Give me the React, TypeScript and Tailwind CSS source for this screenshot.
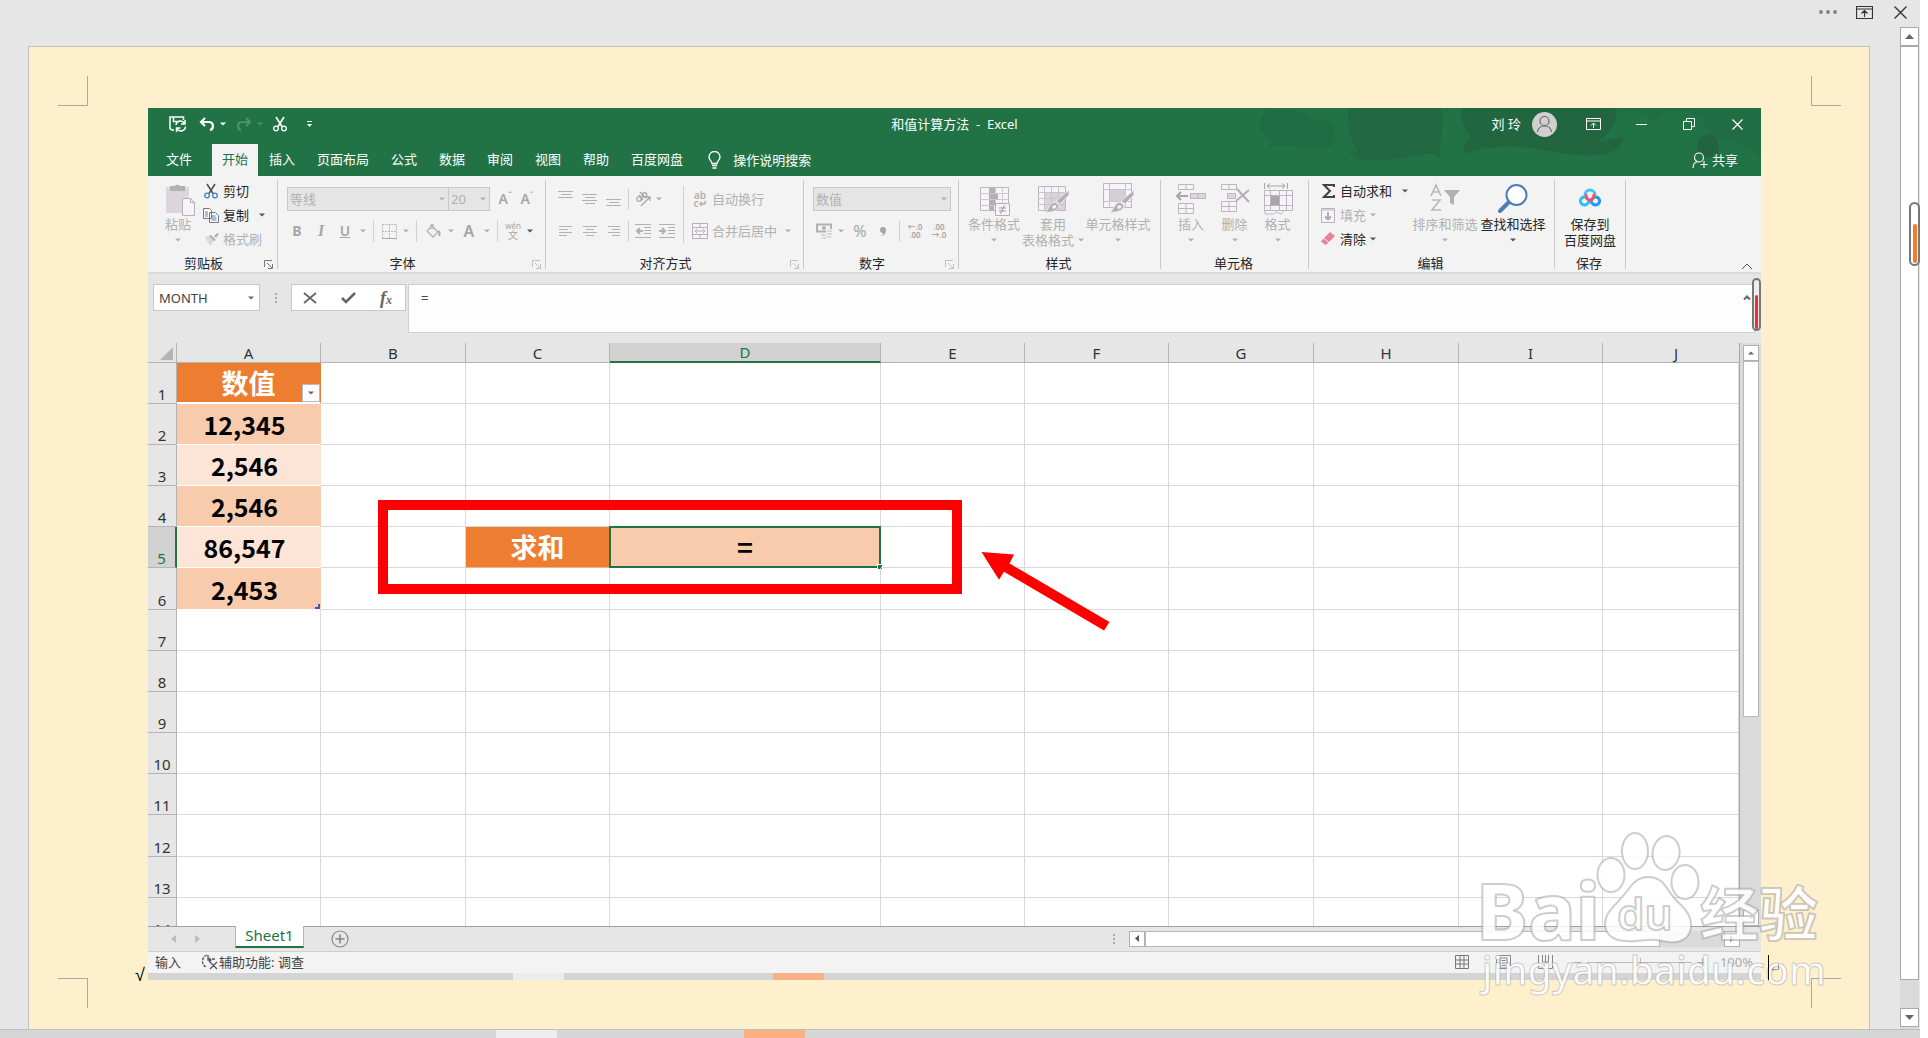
import type { ReactNode } from "react";

interface CellData {
  text: string;
  className: string;
}

const tabs = ["插入", "页面布局", "公式", "数据", "审阅", "视图", "帮助", "百度网盘"];

const columns = ["A", "B", "C", "D", "E", "F", "G", "H", "I", "J"];

const rows = [1, 2, 3, 4, 5, 6, 7, 8, 9, 10, 11, 12, 13, 14];

const cells: Record<string, CellData> = {
  A1: { text: "数值", className: "bg-[#ed7d31] text-[27px] text-white border-r-[#ed7d31] border-b-2 border-b-white" },
  A2: { text: "12,345", className: "bg-[#f8cbad] text-[25px] text-black border-r-[#f8cbad] border-b-white pr-2" },
  A3: { text: "2,546", className: "bg-[#fce4d6] text-[25px] text-black border-r-[#fce4d6] border-b-white pr-2" },
  A4: { text: "2,546", className: "bg-[#f8cbad] text-[25px] text-black border-r-[#f8cbad] border-b-white pr-2" },
  A5: { text: "86,547", className: "bg-[#fce4d6] text-[25px] text-black border-r-[#fce4d6] border-b-white pr-2" },
  A6: { text: "2,453", className: "bg-[#f8cbad] text-[25px] text-black border-r-[#f8cbad] border-b-white pr-2" },
  C5: { text: "求和", className: "bg-[#ed7d31] text-[27px] text-white border-[#f4b183]" },
  D5: { text: "=", className: "bg-[#f8cbad] text-[27px] text-black" },
};

function Caret({ className = "text-[#b1b1b1]" }: { className?: string }) {
  return (
    <svg width="6" height="4" viewBox="0 0 6 4" className={`shrink-0 ${className}`}>
      <path d="M0 .5h6L3 3.5z" fill="currentColor" />
    </svg>
  );
}

function CaretBox({ wide = true, className }: { wide?: boolean; className?: string }) {
  return (
    <span className={`flex shrink-0 justify-center ${wide ? "w-3" : "w-2"}`}>
      <Caret className={className} />
    </span>
  );
}

function IconButton({
  label,
  className = "w-6",
  children,
}: {
  label: string;
  className?: string;
  children: ReactNode;
}) {
  return (
    <button
      type="button"
      aria-label={label}
      className={`flex h-6 shrink-0 items-center justify-center ${className}`}
    >
      {children}
    </button>
  );
}

function Divider({ className }: { className: string }) {
  return <span className={`w-px shrink-0 bg-[#d2d2d2] ${className}`} />;
}

function Group({
  title,
  className,
  launcher,
  children,
}: {
  title: string;
  className: string;
  launcher?: string;
  children: ReactNode;
}) {
  return (
    <section className={`flex shrink-0 ${className}`}>
      <div className="flex min-w-0 flex-1 flex-col">
        <div className="flex h-[79px]">{children}</div>
        <div
          className={`relative flex h-[17px] items-center justify-center pb-px ${
            launcher ? "pr-[18px]" : "pr-[2px]"
          }`}
        >
          <h2>{title}</h2>
          {launcher && (
            <button
              type="button"
              aria-label={`${title}设置`}
              className={`absolute right-1 bottom-[3px] ${launcher}`}
            >
              <svg width="9" height="9" viewBox="0 0 9 9" fill="none" stroke="currentColor">
                <path d="M.5 7V.5H8M3 3l5 5M8.5 4v4.5H4" />
              </svg>
            </button>
          )}
        </div>
      </div>
      <span className="mt-1 h-[89px] w-px bg-[#c9c9c9]" />
    </section>
  );
}

function BigButton({
  icon,
  label,
  second,
  className,
  caretClass,
  noCaret,
}: {
  icon: ReactNode;
  label: string;
  second?: string;
  className: string;
  caretClass?: string;
  noCaret?: boolean;
}) {
  return (
    <button
      type="button"
      className={`flex shrink-0 flex-col items-center pt-[7px] leading-4 whitespace-nowrap ${className}`}
    >
      <span className="flex h-[33px] items-start">{icon}</span>
      <span>{label}</span>
      <span className="flex h-4 items-center gap-1">
        {second}
        {!noCaret && <Caret className={caretClass} />}
      </span>
    </button>
  );
}

function SmallButton({
  icon,
  label,
  className = "",
  children,
}: {
  icon: ReactNode;
  label: string;
  className?: string;
  children?: ReactNode;
}) {
  return (
    <button
      type="button"
      className={`flex h-6 items-center gap-1 whitespace-nowrap ${className}`}
    >
      <span className="flex w-4 justify-center">{icon}</span>
      {label}
      {children}
    </button>
  );
}

function DisabledSelect({
  label,
  value,
  className,
}: {
  label: string;
  value: string;
  className: string;
}) {
  return (
    <div className={`relative flex h-6 items-center ${className}`}>
      <select
        aria-label={label}
        disabled
        className="h-6 w-full appearance-none border border-[#c8c8c8] bg-[#e5e5e5] pl-[2px] leading-5 text-[#b1b1b1] opacity-100"
      >
        <option>{value}</option>
      </select>
      <span className="absolute right-1">
        <Caret />
      </span>
    </div>
  );
}

function Scissors({ blade, handle }: { blade: string; handle: string }) {
  return (
    <svg width="14" height="16" viewBox="0 0 14 16" fill="none">
      <path d="M3 1l6 9.5M11 1L5 10.5" className={blade} strokeWidth="1.6" />
      <circle cx="3" cy="12.5" r="2.3" className={handle} strokeWidth="1.3" />
      <circle cx="11" cy="12.5" r="2.3" className={handle} strokeWidth="1.3" />
    </svg>
  );
}

function Lines({ rows: d }: { rows: string }) {
  return (
    <svg width="16" height="18" viewBox="0 0 16 18">
      <path d={d} stroke="#b1b1b1" fill="none" />
    </svg>
  );
}

function Brush() {
  return (
    <>
      <path d="M33 7v5l-9 9-4-3z" fill="#b3afb3" stroke="#f3f3f3" strokeWidth=".8" />
      <path d="M19 19l4 3c0 5-6 8-14 7 4-2 4-9 10-10z" fill="#b3afb3" stroke="#f3f3f3" strokeWidth=".8" />
      <path d="M18 22c2 0 3 1 2 3l-3 1c-1-2-1-3 1-4z" fill="#f3f3f3" />
    </>
  );
}

function TitleBar() {
  return (
    <header className="relative bg-[#217346] text-white">
      <svg
        className="absolute top-0 right-0"
        width="510"
        height="68"
        viewBox="0 0 510 68"
        aria-hidden="true"
      >
        <path d="M18 2h24c14 2 18 8 22 10 12-2 22 4 20 16-1 4-3 6-6 7l7-1c-2 6-20 9-34 5-14-2-24-2-34 1l4-8C2 24 8 6 18 2z" fill="#206c42" />
        <path d="M98 0h92c3 12 1 30-2 40l2 10-8-4c-18 0-26 5-54 6-16 1-26-2-31-9l10 1c-8-12-12-30-9-44z" fill="#226841" />
        <path d="M211 0h153c4 12-3 26-18 34 10 0 18-5 26-4 0 14-20 19-42 17-32-2-48-10-80-8-16 0-28 4-38 7 0-8 4-14 8-18-8-6-11-18-9-28z" fill="#226640" />
        <path d="M366 6c16-6 30 0 38 10 12-18 34-18 46-4 6 6 8 12 8 18l22 2c14 6 22 12 30 18V0H366z" fill="#216d43" />
        <circle cx="457" cy="38" r="11" fill="#22643f" />
      </svg>

      <div className="relative grid h-9 grid-cols-[1fr_auto_1fr] items-center pb-1">
        <div className="flex items-center pl-5">
          <button type="button" aria-label="保存" className="flex w-5 justify-center">
            <svg width="18" height="16" viewBox="0 0 18 16" fill="none" stroke="white" strokeWidth="1.5">
              <path d="M5 14H3L1 12.500V1h13.500v3M4.500 1v4.500h4" />
              <path d="M7 9a4.500 4.500 0 0 1 8.500-1.500M16.500 10.500a4.500 4.500 0 0 1-8.500 2M16 4v4h-4M7.500 16v-4h4" />
            </svg>
          </button>
          <button type="button" aria-label="撤消" className="ml-[9px] flex w-5 justify-center">
            <svg width="16" height="14" viewBox="0 0 16 14" fill="none" stroke="white" strokeWidth="2.200">
              <path d="M6 1L2 5l4 4M2 5h8c5 0 5 7 1 8" />
            </svg>
          </button>
          <CaretBox className="text-white" />
          <button type="button" aria-label="恢复" className="ml-[5px] flex w-5 justify-center">
            <svg width="16" height="14" viewBox="0 0 16 14" fill="none" stroke="#4d9069" strokeWidth="2.200">
              <path d="M10 1l4 4-4 4M14 5H6C1 5 1 12 5 13" />
            </svg>
          </button>
          <CaretBox className="text-[#4d9069]" />
          <button type="button" aria-label="剪切" className="ml-1 flex w-5 justify-center">
            <Scissors blade="stroke-white" handle="stroke-white" />
          </button>
          <button type="button" aria-label="自定义快速访问工具栏" className="ml-[13px] flex w-3 justify-center">
            <svg width="5" height="6" viewBox="0 0 5 6" fill="white">
              <path d="M0 0h5v1H0zM0 3h5L2.500 6z" />
            </svg>
          </button>
        </div>

        <h1 className="whitespace-pre">和值计算方法  -  Excel</h1>

        <div className="flex items-center justify-end">
          <span className="mr-[11px]">刘 玲</span>
          <svg width="25" height="25" viewBox="0 0 25 25" className="mr-3">
            <circle cx="12.500" cy="12.500" r="12.500" fill="#d0d0d0" />
            <g fill="none" stroke="#666" strokeWidth="1.200">
              <circle cx="12.500" cy="9" r="4.500" />
              <path d="M5.500 20c1-8 13-8 14 0" />
            </g>
          </svg>
          <button type="button" aria-label="功能区显示选项" className="flex w-12 justify-center">
            <svg width="15" height="12" viewBox="0 0 15 12" fill="none" stroke="white">
              <path d="M.5.5h14v11H.5zM.5 3h14M7.500 10V5M5 7.500L7.500 5 10 7.500" />
            </svg>
          </button>
          <button type="button" aria-label="最小化" className="flex w-12 justify-center">
            <span className="h-px w-[11px] bg-white" />
          </button>
          <button type="button" aria-label="还原" className="flex w-12 justify-center">
            <svg width="12" height="12" viewBox="0 0 12 12" fill="none" stroke="white">
              <path d="M.5 3.500h8v8h-8zM3.500 3V.5h8v8H9" />
            </svg>
          </button>
          <button type="button" aria-label="关闭" className="flex w-12 justify-center">
            <svg width="11" height="11" viewBox="0 0 11 11" stroke="white" strokeWidth="1.200">
              <path d="M.5.5l10 10M10.500.5l-10 10" />
            </svg>
          </button>
        </div>
      </div>

      <nav className="relative flex h-8 items-stretch whitespace-nowrap">
        <button type="button" className="w-16 shrink-0 pr-[2px] pb-[3px]">文件</button>
        <button type="button" className="w-[46px] shrink-0 bg-[#f3f3f3] pb-[3px] text-[#217346]">
          开始
        </button>
        {tabs.map((tab) => (
          <button key={tab} type="button" className="px-[11px] pb-[3px]">
            {tab}
          </button>
        ))}
        <button type="button" className="ml-[14px] flex items-center gap-3 pb-px">
          <svg width="13" height="18" viewBox="0 0 13 18" fill="none" stroke="white" strokeWidth="1.300">
            <path d="M4 12.500C4 10 1 9 1 6a5.500 5.500 0 0 1 11 0c0 3-3 4-3 6.500zM4 14.500h5M4.500 17h4" />
          </svg>
          操作说明搜索
        </button>
        <button type="button" className="mr-[23px] ml-auto flex items-center gap-1">
          <svg width="16" height="17" viewBox="0 0 16 17" fill="none" stroke="white" strokeWidth="1.100">
            <circle cx="7" cy="5.500" r="4.500" />
            <path d="M1 16c0-4 2-6 5-6.500M12 9v7M8.500 12.500h7" />
          </svg>
          共享
        </button>
      </nav>
    </header>
  );
}

function ClipboardGroup() {
  return (
    <Group title="剪贴板" className="w-[130px]" launcher="text-[#777]">
      <BigButton
        className="ml-[10px] w-10 text-[#b1b1b1]"
        label="粘贴"
        icon={
          <svg width="30" height="33" viewBox="0 0 30 33" className="ml-1">
            <path d="M1 4h23v26H1z" fill="#dcd6dc" />
            <path d="M5 3h5a3 3 0 0 1 5 0h5v5H5z" fill="#b1b1b1" />
            <path d="M17.500 15.500h8l4 4v13h-12z" fill="#f8f3fa" stroke="#b8b0b8" />
            <path d="M25.500 15.500v4h4" fill="none" stroke="#b8b0b8" />
          </svg>
        }
      />
      <div className="ml-[5px] flex flex-col pt-[3px]">
        <SmallButton
          label="剪切"
          icon={<Scissors blade="stroke-[#555]" handle="stroke-[#4a7ebb]" />}
        />
        <SmallButton
          label="复制"
          icon={
            <svg width="16" height="15" viewBox="0 0 16 15" fill="white" stroke="#777">
              <path d="M.5.500h6l2 2v8h-8zM6.500 4.500h6l3 3v7h-9z" />
              <path d="M2 4h3M2 6h3M2 8h3M8.500 8h4M8.500 10h5M8.500 12h5" stroke="#4a7ebb" />
            </svg>
          }
        >
          <span className="ml-[6px]">
            <Caret className="text-[#555]" />
          </span>
        </SmallButton>
        <SmallButton
          label="格式刷"
          className="text-[#b1b1b1]"
          icon={
            <svg width="15" height="13" viewBox="0 0 15 13">
              <path d="M1 4l5-1 4 5-4 5z" fill="#ddd6dd" />
              <path d="M7 2l5 5-2 1-5-5zM10 3l3-3 2 1-3 4z" fill="#b1b1b1" />
            </svg>
          }
        />
      </div>
    </Group>
  );
}

function FontGroup() {
  return (
    <Group title="字体" className="w-[268px]" launcher="text-[#c0c0c0]">
      <div className="flex flex-col gap-2 pt-[11px] text-[#a6a6a6]">
        <div className="flex pl-[9px]">
          <DisabledSelect label="字体" value="等线" className="w-[162px]" />
          <DisabledSelect label="字号" value="20" className="-ml-px w-[42px]" />
          <IconButton label="增大字号" className="ml-1 w-[22px] text-sm font-semibold">
            A<sup className="text-[8px]">ˆ</sup>
          </IconButton>
          <IconButton label="减小字号" className="w-[22px] text-sm font-semibold">
            A<sup className="text-[8px]">ˇ</sup>
          </IconButton>
        </div>
        <div className="flex items-center pl-[7px] text-sm">
          <IconButton label="加粗">
            <b>B</b>
          </IconButton>
          <IconButton label="倾斜">
            <i className="font-['Liberation_Serif'] text-base font-bold">I</i>
          </IconButton>
          <IconButton label="下划线">
            <u className="font-semibold">U</u>
          </IconButton>
          <CaretBox />
          <Divider className="mx-1 h-[22px]" />
          <IconButton label="边框" className="w-[22px]">
            <svg width="15" height="15" viewBox="0 0 15 15" fill="none" stroke="#c0b4c0">
              <path d="M.5.500h14v14H.5zM7.500 0v15M0 7.500h15" strokeDasharray="2 1" />
              <path d="M0 14.500h15" stroke="#aaa" />
            </svg>
          </IconButton>
          <CaretBox />
          <Divider className="mx-1 h-[22px]" />
          <IconButton label="填充颜色">
            <svg width="15" height="15" viewBox="0 0 15 15" fill="none" stroke="#b1b1b1" strokeWidth="1.300">
              <path d="M6 2l6 6-5 5-6-6zM5 5V1h2v4" />
              <path d="M12 7c2 1 2 3 1 5" strokeWidth="2" />
            </svg>
          </IconButton>
          <CaretBox />
          <IconButton label="字体颜色">
            <span className="text-base font-semibold">A</span>
          </IconButton>
          <CaretBox />
          <Divider className="mx-1 h-[22px]" />
          <IconButton label="拼音" className="w-[22px] flex-col">
            <span className="text-[8px] leading-[8px]">wén</span>
            <span className="text-[10px] leading-[11px]">文</span>
          </IconButton>
          <CaretBox className="text-[#555]" />
        </div>
      </div>
    </Group>
  );
}

function AlignGroup() {
  return (
    <Group title="对齐方式" className="w-[258px]" launcher="text-[#c0c0c0]">
      <div className="flex w-[137px] flex-col gap-2 pt-[11px] pl-2">
        <div className="flex items-center">
          <IconButton label="顶端对齐">
            <Lines rows="M0 1.500h15M3 4.500h10M0 7.500h15" />
          </IconButton>
          <IconButton label="垂直居中">
            <Lines rows="M0 4.500h15M3 7.500h10M0 10.500h15M3 13.500h10" />
          </IconButton>
          <IconButton label="底端对齐">
            <Lines rows="M0 9.500h15M3 12.500h10M0 15.500h15" />
          </IconButton>
          <Divider className="mx-[2px] h-[22px]" />
          <IconButton label="方向">
            <svg width="17" height="16" viewBox="0 0 17 16" fill="none" stroke="#a6a6a6" strokeWidth="1.300">
              <circle cx="4" cy="8" r="2.300" />
              <path d="M4 4l4 5M5 1l6 6" />
              <circle cx="9.500" cy="4" r="2.300" />
              <path d="M6 15L15 6M11 6h4v4" />
            </svg>
          </IconButton>
          <CaretBox wide={false} />
        </div>
        <div className="flex items-center">
          <IconButton label="左对齐">
            <Lines rows="M1 4.500h13M1 7.500h9M1 10.500h13M1 13.500h8" />
          </IconButton>
          <IconButton label="居中">
            <Lines rows="M1 4.500h14M4 7.500h8M1 10.500h14M4 13.500h8" />
          </IconButton>
          <IconButton label="右对齐">
            <Lines rows="M2 4.500h12M6 7.500h8M2 10.500h12M6 13.500h8" />
          </IconButton>
          <Divider className="mx-[2px] h-[22px]" />
          <IconButton label="减少缩进量">
            <svg width="16" height="16" viewBox="0 0 16 16" fill="none" stroke="#b1b1b1">
              <path d="M0 1.500h16M9 4.500h7M9 7.500h7M9 10.500h7M0 14.500h16" />
              <path d="M8 8H2M5 5L2 8l3 3" strokeWidth="2" />
            </svg>
          </IconButton>
          <IconButton label="增加缩进量">
            <svg width="16" height="16" viewBox="0 0 16 16" fill="none" stroke="#b1b1b1">
              <path d="M0 1.500h16M9 4.500h7M9 7.500h7M9 10.500h7M0 14.500h16" />
              <path d="M0 8h6M3 5l3 3-3 3" strokeWidth="2" />
            </svg>
          </IconButton>
        </div>
      </div>
      <Divider className="mt-[10px] h-[57px]" />
      <div className="flex flex-col gap-2 pt-[11px] pl-2 text-[#b1b1b1]">
        <SmallButton
          label="自动换行"
          icon={
            <span className="flex flex-col text-[10px] leading-[8px] font-semibold">
              <span>ab</span>
              <span>c↵</span>
            </span>
          }
        />
        <SmallButton
          label="合并后居中"
          icon={
            <svg width="16" height="16" viewBox="0 0 16 16" fill="#f8f3fa" stroke="#b9adb9">
              <path d="M.5.500h15v15H.5zM.5 4.500h15M.5 11.500h15M8 .5v4M8 11.500v4" />
              <path d="M3 8h10M5 6L3 8l2 2M11 6l2 2-2 2" fill="none" />
            </svg>
          }
        >
          <span className="ml-1">
            <Caret />
          </span>
        </SmallButton>
      </div>
    </Group>
  );
}

function NumberGroup() {
  return (
    <Group title="数字" className="w-[155px]" launcher="text-[#c0c0c0]">
      <div className="flex flex-col gap-2 pt-[11px] pl-[9px] text-[#a6a6a6]">
        <DisabledSelect label="数字格式" value="数值" className="w-[138px]" />
        <div className="flex items-center">
          <IconButton label="会计数字格式" className="w-[22px]">
            <svg width="16" height="16" viewBox="0 0 16 16">
              <path d="M1 1.500h14v7H1z" fill="#f3f3f3" stroke="#b1b1b1" strokeWidth="2" />
              <circle cx="8" cy="5" r="2" fill="#b1b1b1" />
              <path d="M10 6h6v9h-6z" fill="#f3f3f3" />
              <path d="M11 7h5v2h-5zM11 10h5v2h-5zM11 13h4v2h-4zM5 11h5v2H5zM6 14h4v2H6z" fill="#ddd6dd" />
            </svg>
          </IconButton>
          <CaretBox />
          <IconButton label="百分比样式" className="w-[26px] text-base">%</IconButton>
          <IconButton label="千位分隔样式" className="w-5">
            <svg width="6" height="9" viewBox="0 0 6 9">
              <path d="M1 9c2-1 2-2 2-3a3 3 0 1 1 3-3c0 3-2 6-5 6z" fill="#a6a6a6" />
            </svg>
          </IconButton>
          <Divider className="mr-[3px] ml-[6px] h-[22px]" />
          <IconButton label="增加小数位数" className="w-6 flex-col text-[8px] leading-[8px] font-semibold">
            <span>←.0</span>
            <span>.00</span>
          </IconButton>
          <IconButton label="减少小数位数" className="w-6 flex-col text-[8px] leading-[8px] font-semibold">
            <span>.00</span>
            <span>→.0</span>
          </IconButton>
        </div>
      </div>
    </Group>
  );
}

function StylesGroup() {
  return (
    <Group title="样式" className="w-[202px]">
      <div className="flex pl-[7px] text-[#b1b1b1]">
        <BigButton
          className="w-14"
          label="条件格式"
          icon={
            <svg width="32" height="33" viewBox="0 0 32 33">
              <path d="M2.500 4.500h28v23h-28z" fill="#f8f3fa" stroke="#bdb5bd" />
              <path d="M2 10.500h29M2 16.500h29M2 22.500h29M11.500 4v24M17.500 4v24M24.500 4v24" stroke="#cfc7cf" />
              <path d="M11 5h6v5h-6zM11 11h9v5h-9zM11 17h6v5h-6zM11 23h5v4h-5z" fill="#b3afb3" />
              <path d="M17.500 20.500h14v12h-14z" fill="#f8f3fa" stroke="#b3afb3" />
              <path d="M21 25h7M21 28h7M26.500 22l-4 9" stroke="#999" />
            </svg>
          }
        />
        <BigButton
          className="w-[62px]"
          label="套用"
          second="表格格式"
          icon={
            <svg width="34" height="33" viewBox="0 0 34 33">
              <path d="M2.500 3.500h27v24h-27z" fill="#f8f3fa" stroke="#bdb5bd" />
              <path d="M9 10h20v17H9z" fill="#d9d3d9" />
              <path d="M2 9.500h28M2 15.500h28M2 21.500h28M8.500 3v25M15.500 3v25M22.500 3v25" stroke="#cbc3cb" />
              <Brush />
            </svg>
          }
        />
        <BigButton
          className="w-[68px]"
          label="单元格样式"
          icon={
            <svg width="34" height="33" viewBox="0 0 34 33">
              <path d="M2.500.500h28v24h-28z" fill="#f8f3fa" stroke="#bdb5bd" />
              <path d="M2 6.500h28M2 18.500h28M8.500.500v24M24.500.500v24" stroke="#cbc3cb" />
              <path d="M9 7h15v11H9z" fill="#d5cfd5" />
              <Brush />
            </svg>
          }
        />
      </div>
    </Group>
  );
}

function CellsGroup() {
  return (
    <Group title="单元格" className="w-[148px]">
      <div className="flex pl-2 text-[#b1b1b1]">
        <BigButton
          className="w-11"
          label="插入"
          icon={
            <svg width="31" height="32" viewBox="0 0 31 32" fill="#f8f3fa" stroke="#bdb5bd">
              <path d="M2.500 1.500h15v5h-15zM10 1v5M2.500 20.500h15v10h-15zM2.500 25.500h15M10 20v10" />
              <path d="M14.500 10.500h15v5h-15zM22 10v5" fill="#dcd5dc" />
              <path d="M12 13H1M5 9l-4 4 4 4" fill="none" stroke="#a9a5a9" strokeWidth="2" />
            </svg>
          }
        />
        <BigButton
          className="w-[43px]"
          label="删除"
          icon={
            <svg width="31" height="32" viewBox="0 0 31 32" fill="#f8f3fa" stroke="#bdb5bd">
              <path d="M2.500 1.500h15v5h-15zM10 1v5M2.500 18.500h15v10h-15zM2.500 23.500h15M10 18v10" />
              <path d="M8.500 10.500h8v5h-8z" fill="#dcd5dc" />
              <path d="M18 6l12 13M30 7L17 18" fill="none" stroke="#b3afb3" strokeWidth="2" />
            </svg>
          }
        />
        <BigButton
          className="w-[43px]"
          label="格式"
          icon={
            <svg width="30" height="33" viewBox="0 0 30 33" fill="#f8f3fa" stroke="#bdb5bd">
              <path d="M1.500 7.500h28v20h-28zM1 12.500h28M1 22.500h28M7.500 7v20M16.500 7v20M23.500 7v20M2 28v3h9l2-2 5 2 3-3" />
              <path d="M8 13h8v9H8z" fill="#a9a5a9" stroke="none" />
              <path d="M1.500 0v6M24.500 0v6M4 3h18M7 .5L4 3l3 2.500M19 .5L22 3l-3 2.500" fill="none" stroke="#a9a5a9" />
            </svg>
          }
        />
      </div>
    </Group>
  );
}

function EditGroup() {
  return (
    <Group title="编辑" className="w-[246px]">
      <div className="flex w-[102px] shrink-0 flex-col pt-[3px] pl-[11px]">
        <SmallButton
          label="自动求和"
          icon={
            <svg width="13" height="14" viewBox="0 0 13 14" fill="none" stroke="#444" strokeWidth="2">
              <path d="M12 3V1H2l6 6-6 6h10v-2" />
            </svg>
          }
        >
          <span className="ml-[6px]">
            <Caret className="text-[#555]" />
          </span>
        </SmallButton>
        <SmallButton
          label="填充"
          className="text-[#b1b1b1]"
          icon={
            <svg width="14" height="15" viewBox="0 0 14 15" fill="#f8f3fa" stroke="#b9b1b9">
              <path d="M.5.500h13v14H.5zM.5 2h13" />
              <path d="M7 4v7M4 8.500L7 11.500l3-3" fill="none" stroke="#a9a5a9" strokeWidth="1.800" />
            </svg>
          }
        >
          <Caret />
        </SmallButton>
        <SmallButton
          label="清除"
          icon={
            <svg width="14" height="14" viewBox="0 0 14 14" fill="#e8829a">
              <path d="M9 0l5 4-6 6-5-4zM2.500 6.500l5 4L4.500 13 0 9.500z" />
            </svg>
          }
        >
          <Caret className="text-[#555]" />
        </SmallButton>
      </div>
      <BigButton
        className="w-[68px] text-[#b1b1b1]"
        label="排序和筛选"
        icon={
          <svg width="30" height="30" viewBox="0 0 30 30" fill="none" stroke="#b9b9b9" strokeWidth="1.600">
            <path d="M1 13L6 2l5 11M3 9h6M2 17h8L2 27h9" />
            <path d="M14 7h16l-6 7v8l-4-2v-6z" fill="#b1b1b1" stroke="none" />
          </svg>
        }
      />
      <BigButton
        className="w-[68px]"
        label="查找和选择"
        caretClass="text-[#555]"
        icon={
          <svg width="30" height="31" viewBox="0 0 30 31">
            <path d="M11 19l-9 9" stroke="#4a7ebb" strokeWidth="4" strokeLinecap="round" />
            <circle cx="18.500" cy="12" r="10" fill="white" stroke="#4a7ebb" strokeWidth="2" />
          </svg>
        }
      />
    </Group>
  );
}

function Ribbon() {
  return (
    <div className="relative flex h-[98px] border-b-2 border-[#dadada] bg-[#f3f3f3]">
      <ClipboardGroup />
      <FontGroup />
      <AlignGroup />
      <NumberGroup />
      <StylesGroup />
      <CellsGroup />
      <EditGroup />
      <Group title="保存" className="w-[71px]">
        <BigButton
          className="flex-1"
          label="保存到"
          second="百度网盘"
          noCaret
          icon={
            <svg width="24" height="26" viewBox="0 0 24 26" fill="none" strokeWidth="3">
              <path d="M7 12a5 5 0 1 1 10 0" stroke="#45c4f5" />
              <path d="M9.500 15.500a4 4 0 1 0 0 5l5-5" stroke="#2ac0f5" />
              <path d="M14.500 15.500a4 4 0 1 1 0 5l-2-2" stroke="#1a9cf5" />
              <path d="M8.500 11a4 4 0 1 0 7 0" stroke="#f2506b" />
            </svg>
          }
        />
      </Group>
      <button type="button" aria-label="折叠功能区" className="absolute right-2 bottom-[2px]">
        <svg width="12" height="7" viewBox="0 0 12 7" fill="none" stroke="#555">
          <path d="M1 6l5-5 5 5" />
        </svg>
      </button>
    </div>
  );
}

function FormulaBar() {
  return (
    <div className="relative flex items-start bg-[#e6e6e6] pt-[10px] pr-[6px] pb-[10px] pl-[5px]">
      <div className="relative flex h-[27px] w-[107px] items-center">
        <select
          aria-label="名称框"
          className="h-full w-full appearance-none border border-[#c8c8c8] bg-white pl-[5px] text-[#444]"
        >
          <option>MONTH</option>
        </select>
        <span className="absolute right-[6px]">
          <Caret className="text-[#666]" />
        </span>
      </div>
      <div className="flex h-[27px] w-[31px] flex-col items-center justify-center gap-[2px]">
        <span className="size-[2px] bg-[#aaa]" />
        <span className="size-[2px] bg-[#aaa]" />
        <span className="size-[2px] bg-[#aaa]" />
      </div>
      <div className="flex h-[27px] w-[115px] shrink-0 items-center border border-[#c8c8c8] bg-white">
        <IconButton label="取消" className="w-9">
          <svg width="14" height="12" viewBox="0 0 14 12" stroke="#666" strokeWidth="1.800">
            <path d="M1 1l12 10M13 1L1 11" />
          </svg>
        </IconButton>
        <IconButton label="输入" className="w-10">
          <svg width="15" height="12" viewBox="0 0 15 12" fill="none" stroke="#666" strokeWidth="2.600">
            <path d="M1 6l4 4 9-9" />
          </svg>
        </IconButton>
        <IconButton label="插入函数" className="w-9">
          <i className="font-['Liberation_Serif'] text-lg font-bold text-[#666]">
            f<span className="text-xs">x</span>
          </i>
        </IconButton>
      </div>
      <textarea
        aria-label="编辑栏"
        defaultValue="="
        className="ml-[2px] block h-[49px] flex-1 resize-none border border-[#d0d0d0] bg-[#fdfdfd] py-1 pl-3 leading-[18px] text-[#444]"
      />
      <span className="absolute top-[21px] right-[10px]">
        <svg width="8" height="5" viewBox="0 0 8 5">
          <path d="M1 4.500L4 1.500l3 3" fill="none" stroke="#666" strokeWidth="2" />
        </svg>
      </span>
      <span className="absolute top-1 right-0 flex h-[53px] w-[9px] items-end justify-center rounded-full border-2 border-[#777] bg-[#eee]">
        <span className="h-[34px] w-[3px] rounded-full bg-[#f22d2d]" />
      </span>
    </div>
  );
}

function Cell({ id }: { id: string }) {
  const cell = cells[id];
  return (
    <td
      className={`relative border-r border-b p-0 text-center font-['Noto_Sans_CJK_SC',sans-serif] leading-[38px] font-bold ${
        cell ? cell.className : "border-[#d9d9d9]"
      }`}
    >
      {cell?.text}
      {id === "A1" && (
        <button
          type="button"
          aria-label="筛选"
          className="absolute right-0 bottom-0 flex size-[18px] items-center justify-center border border-[#bbb] bg-[#fafafa]"
        >
          <Caret className="text-[#666]" />
        </button>
      )}
      {id === "A6" && (
        <svg width="5" height="5" viewBox="0 0 5 5" className="absolute right-0 bottom-0">
          <path d="M3 0h2v5H0V3h3z" fill="#4555a5" />
        </svg>
      )}
      {id === "D5" && (
        <span className="absolute -inset-px border-2 border-[#217346]">
          <span className="absolute -right-[3px] -bottom-[3px] size-[5px] border-t border-l border-white bg-[#217346]" />
        </span>
      )}
    </td>
  );
}

function Sheet() {
  return (
    <div className="flex h-[583px]">
      <div className="relative min-w-0 flex-1 overflow-hidden border-r border-[#a8a8a8] bg-white">
        <table className="w-full table-fixed border-separate border-spacing-0">
          <colgroup>
            <col className="w-[29px]" />
            <col className="w-[144px]" />
            <col className="w-[145px]" />
            <col className="w-[144px]" />
            <col className="w-[271px]" />
            <col className="w-[144px]" />
            <col className="w-[144px]" />
            <col className="w-[145px]" />
            <col className="w-[145px]" />
            <col className="w-[144px]" />
            <col />
          </colgroup>
          <thead>
            <tr className="h-5 text-[15px] leading-[18px]">
              <th className="border-r border-b border-[#b4b4b4] bg-[#e6e6e6] p-0">
                <svg width="13" height="13" viewBox="0 0 13 13" className="mt-[2px] ml-3">
                  <path d="M13 0v13H0z" fill="#b4b4b4" />
                </svg>
              </th>
              {columns.map((column, i) => (
                <th
                  key={column}
                  className={`p-0 font-normal ${
                    column === "D"
                      ? "border-r border-b-2 border-r-[#b4b4b4] border-b-[#217346] bg-[#d2d2d2] text-[#217346]"
                      : i === 9
                        ? "border-b border-[#b4b4b4] bg-[#e6e6e6] pl-[10px] text-[#333]"
                        : "border-r border-b border-[#b4b4b4] bg-[#e6e6e6] text-[#333]"
                  }`}
                >
                  {column}
                </th>
              ))}
            </tr>
          </thead>
          <tbody>
            {rows.map((row) => (
              <tr key={row} className={row % 6 === 0 ? "h-[42px]" : "h-[41px]"}>
                <th
                  className={`border-b border-b-[#b4b4b4] p-0 align-bottom text-[15px] leading-[17px] font-normal ${
                    row === 5
                      ? "border-r-2 border-r-[#217346] bg-[#d2d2d2] text-[#217346]"
                      : "border-r border-r-[#b4b4b4] bg-[#e6e6e6] text-[#333]"
                  }`}
                >
                  {row}
                </th>
                {columns.map((column) => (
                  <Cell key={column} id={`${column}${row}`} />
                ))}
              </tr>
            ))}
          </tbody>
        </table>

        {/* callout drawn over the sum cells */}
        <div className="absolute top-[157px] left-[230px] h-[94px] w-[584px] border-[10px] border-[#ff0000]" />
        <svg width="130" height="82" viewBox="0 0 130 82" className="absolute top-[208px] left-[832px]">
          <path d="M1.500 1L34 3.500l-4.500 9L129.500 71l-5.500 8.500L24 20.700l-5 8z" fill="#ff0000" />
        </svg>
      </div>

      <div className="flex w-[21px] shrink-0 flex-col items-center bg-[#dadada] pt-[2px]">
        <button type="button" aria-label="向上滚动" className="flex size-4 items-center justify-center border border-[#b0b0b0] bg-white">
          <Caret className="rotate-180 text-[#666]" />
        </button>
        <div className="h-[356px] w-4 border border-[#b8b8b8] bg-white" />
        <button type="button" aria-label="向下滚动" className="mt-auto flex size-4 items-center justify-center border border-[#b0b0b0] bg-white">
          <Caret className="text-[#666]" />
        </button>
      </div>
    </div>
  );
}

function SheetBar() {
  return (
    <div className="flex h-[25px] items-center border-t border-[#a0a0a0] bg-[#e6e6e6] pr-[21px] pb-px">
      <button type="button" aria-label="上一张工作表" className="ml-[13px] flex w-6 justify-center">
        <svg width="5" height="8" viewBox="0 0 5 8"><path d="M5 0v8L0 4z" fill="#bbb" /></svg>
      </button>
      <button type="button" aria-label="下一张工作表" className="flex w-6 justify-center">
        <svg width="5" height="8" viewBox="0 0 5 8"><path d="M0 0v8l5-4z" fill="#bbb" /></svg>
      </button>
      <button
        type="button"
        className="-mt-px ml-[26px] h-[22px] w-[69px] self-start border-x border-b-2 border-x-[#b4b4b4] border-b-[#217346] bg-white pb-[2px] text-[15px] leading-[18px] text-[#217346]"
      >
        Sheet1
      </button>
      <button type="button" aria-label="新工作表" className="ml-[27px]">
        <svg width="18" height="18" viewBox="0 0 18 18" fill="none" stroke="#888">
          <circle cx="9" cy="9" r="8" strokeWidth="1.200" />
          <path d="M9 4.500v9M4.500 9h9" strokeWidth="1.600" />
        </svg>
      </button>
      <div className="mr-[14px] ml-auto flex flex-col gap-[2px]">
        <span className="size-[2px] bg-[#aaa]" />
        <span className="size-[2px] bg-[#aaa]" />
        <span className="size-[2px] bg-[#aaa]" />
      </div>
      <div className="flex h-4 w-[611px] bg-[#dadada]">
        <button type="button" aria-label="向左滚动" className="flex size-4 items-center justify-center border border-[#b0b0b0] bg-white">
          <svg width="4" height="7" viewBox="0 0 4 7"><path d="M4 0v7L0 3.500z" fill="#555" /></svg>
        </button>
        <div className="h-4 w-[515px] border border-[#b8b8b8] bg-white" />
        <button type="button" aria-label="向右滚动" className="ml-auto flex size-4 items-center justify-center border border-[#b0b0b0] bg-white">
          <svg width="4" height="7" viewBox="0 0 4 7"><path d="M0 0v7l4-3.500z" fill="#555" /></svg>
        </button>
      </div>
    </div>
  );
}

function StatusBar() {
  return (
    <footer>
      <div className="flex h-[22px] items-center border-t border-[#cfcfcf] bg-[#f3f3f3] pr-2 pb-px pl-[7px] leading-5 text-[#444]">
        <span>输入</span>
        <svg width="18" height="16" viewBox="0 0 18 16" fill="none" stroke="#555" className="ml-5">
          <path d="M6 1C0 3 0 12 6 13" strokeDasharray="3 1" strokeWidth="1.300" />
          <path d="M7 1v5h3M8 4l2 2-2 2M14 5h-3M9 8l7 7M16 8l-7 7" strokeWidth="1.300" />
        </svg>
        <span>辅助功能: 调查</span>
        <div className="ml-auto flex items-center text-[#aaa]">
          <svg width="14" height="14" viewBox="0 0 14 14" fill="none" stroke="#777" className="mr-[27px]">
            <path d="M.5.500h13v13H.5zM.5 5h13M.5 9h13M5 .5v13M9 .5v13" />
          </svg>
          <svg width="15" height="14" viewBox="0 0 15 14" fill="none" stroke="#888" className="mr-[27px]">
            <path d="M.5.500h14v13H.5zM4 3h7v10H4zM5.500 5.500h4M5.500 8h4M5.500 10.500h4" />
          </svg>
          <svg width="15" height="14" viewBox="0 0 15 14" fill="none" stroke="#888" className="mr-5">
            <path d="M.5 0v13.500h14V0M4.500 0v7h6V0M7.500 0v7" />
          </svg>
          <span className="h-px w-2 bg-[#aaa]" />
          <svg width="105" height="8" viewBox="0 0 105 8" stroke="#bbb" className="mx-[6px]">
            <path d="M0 4.500h105M53.500 0v8" />
          </svg>
          <svg width="9" height="9" viewBox="0 0 9 9" stroke="#aaa" className="mr-[13px]">
            <path d="M4.500 0v9M0 4.500h9" />
          </svg>
          <span>100%</span>
        </div>
      </div>
      <div className="flex h-[7px] bg-[#d4d4d4]">
        <span className="ml-[365px] w-[51px] bg-[#ececec]" />
        <span className="ml-[209px] w-[51px] bg-[#f8b084]" />
      </div>
    </footer>
  );
}

function Watermark() {
  return (
    <svg
      width="360"
      height="180"
      viewBox="0 0 360 180"
      className="pointer-events-none absolute right-[39px] bottom-6"
      fill="white"
      fillOpacity=".85"
      stroke="#909090"
      strokeOpacity=".45"
      strokeWidth="2"
      strokeLinejoin="round"
    >
      <text x="6" y="115" className="font-['Noto_Sans'] text-[78px] font-extrabold">Bai</text>
      <ellipse cx="141" cy="50" rx="13.500" ry="17" />
      <ellipse cx="165" cy="26" rx="13" ry="18" />
      <ellipse cx="196" cy="28" rx="13.500" ry="17" transform="rotate(8 196 28)" />
      <ellipse cx="215" cy="57" rx="13.500" ry="17" />
      <path d="M178 52c16 0 18 12 27 22 9 9 16 15 16 26 0 14-11 18-22 17-8-1-14-3-21-2-9 0-14 2-21 1-12 0-22-5-22-18 0-10 9-16 17-26 8-8 12-20 26-20z" />
      <text x="147" y="105" className="font-['Noto_Sans'] text-[44px] font-semibold">du</text>
      <text x="230" y="111" className="font-['Noto_Sans_CJK_SC'] text-[59px] font-bold">经验</text>
      <text x="12" y="160" className="font-['Noto_Sans'] text-[39px] font-medium" strokeWidth="1">
        jingyan.baidu.com
      </text>
    </svg>
  );
}

export default function App() {
  return (
    <div className="min-h-screen bg-white pr-2 font-['Noto_Sans','Noto_Sans_CJK_SC',sans-serif] text-[13px] leading-4 text-[#262626]">
      <div className="relative flex min-h-screen flex-col bg-[#e6e6e6]">
        <div className="flex h-[27px] items-start justify-end pr-[2px]">
          <IconButton label="更多" className="w-9">
            <svg width="18" height="4" viewBox="0 0 18 4" fill="#808080">
              <circle cx="2" cy="2" r="1.900" />
              <circle cx="9" cy="2" r="1.900" />
              <circle cx="16" cy="2" r="1.900" />
            </svg>
          </IconButton>
          <IconButton label="全屏显示" className="w-9">
            <svg width="17" height="13" viewBox="0 0 17 13" fill="none" stroke="#333">
              <path d="M.5.500h16v12H.5zM.5 3h16M8.500 11V4.500M5.500 7.500l3-3 3 3" strokeWidth="1.200" />
            </svg>
          </IconButton>
          <IconButton label="关闭" className="w-9">
            <svg width="13" height="13" viewBox="0 0 13 13" stroke="#333" strokeWidth="1.400">
              <path d="M.5.500l12 12M12.500.500l-12 12" />
            </svg>
          </IconButton>
        </div>

        <div className="flex flex-1 pr-px pl-7">
          <main className="relative mt-[19px] mr-[30px] min-w-0 flex-1 border-x border-t border-[#c0c0c0] bg-[#fff0cd] pt-[61px] pb-[49px]">
            {/* crop marks of the page margins */}
            <span className="absolute top-[29px] left-[29px] size-[30px] border-r border-b border-[#a8a8a8]" />
            <span className="absolute top-[29px] right-7 size-[30px] border-b border-l border-[#a8a8a8]" />
            <span className="absolute bottom-[21px] left-[29px] size-[30px] border-t border-r border-[#a8a8a8]" />
            <span className="absolute right-7 bottom-[21px] size-[30px] border-t border-l border-[#a8a8a8]" />

            <div className="flex items-end">
              <span className="w-[119px] shrink-0 pr-[3px] text-right font-['Liberation_Sans'] text-lg leading-[10px] text-black">
                √
              </span>
              <article className="min-w-0 flex-1">
                <TitleBar />
                <Ribbon />
                <FormulaBar />
                <Sheet />
                <SheetBar />
                <StatusBar />
              </article>
              <span className="relative z-10 w-[108px] shrink-0">
                <span className="ml-[7px] flex h-[25px] items-center border-l border-black text-[#999]">
                  <svg width="8" height="7" viewBox="0 0 8 7" fill="none" stroke="currentColor" className="ml-[2px]">
                    <path d="M7.500 0v5.500H1M3 3L1 5.500 3 7" />
                  </svg>
                </span>
              </span>
            </div>

            <Watermark />
          </main>

          <div className="flex w-[19px] shrink-0 flex-col bg-[#dadada] pb-[2px]">
            <button type="button" aria-label="向上滚动" className="flex h-[19px] items-center justify-center border border-[#a8a8a8] bg-white">
              <svg width="9" height="5" viewBox="0 0 9 5"><path d="M0 5h9L4.500 0z" fill="#666" /></svg>
            </button>
            <div className="flex-1 border border-[#a8a8a8] bg-white" />
            <button type="button" aria-label="向下滚动" className="mt-7 flex h-[19px] items-center justify-center border border-[#a8a8a8] bg-white">
              <svg width="9" height="5" viewBox="0 0 9 5"><path d="M0 0h9L4.500 5z" fill="#666" /></svg>
            </button>
          </div>
        </div>

        <div className="flex h-[9px] border-t border-[#c0c0c0] bg-[#d6d6d6]">
          <span className="ml-[496px] w-[61px] bg-[#eee]" />
          <span className="ml-[187px] w-[61px] bg-[#f8b084]" />
        </div>

        <span className="absolute top-[202px] right-0 flex h-16 w-[11px] items-end justify-center rounded-full border-2 border-[#777] bg-white pb-px">
          <span className="h-[39px] w-1 rounded-full bg-[#f57b28]" />
        </span>
      </div>
    </div>
  );
}
